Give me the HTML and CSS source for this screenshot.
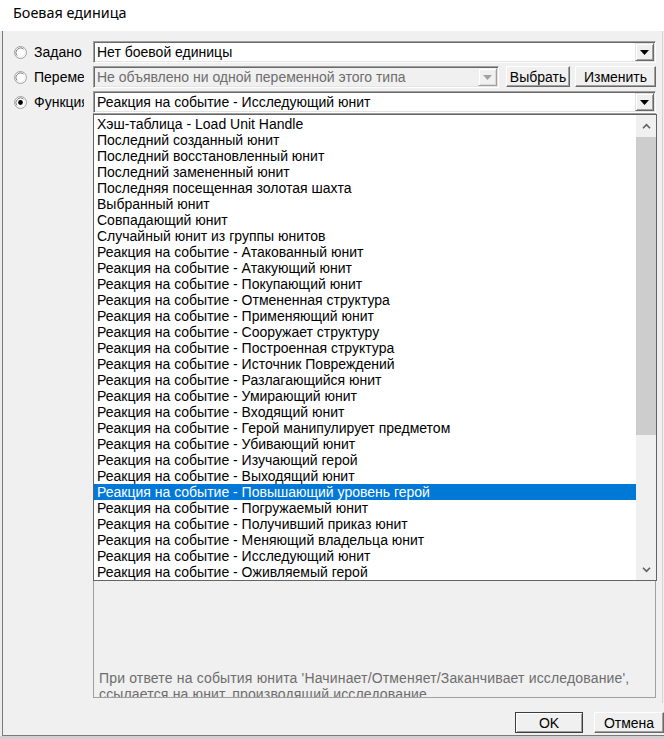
FILE: index.html
```html
<!DOCTYPE html>
<html lang="ru">
<head>
<meta charset="utf-8">
<title>Боевая единица</title>
<link rel="stylesheet" href="styles.css">
</head>
<body>
<div class="page">
  <div class="titlebar">Боевая единица</div>
  <div class="body">
    <div class="leftstrip"></div>
    <div class="client">
      <div class="panel">
        <div class="form">
          <div class="opt">
            <svg class="radio" width="13" height="13" viewBox="0 0 13 13"><circle cx="6.5" cy="6.5" r="6" fill="#fff" stroke="#a0a0a0"/><path d="M3.32 9.68A4.5 4.5 0 0 1 9.68 3.32" stroke="#7a7a7a" fill="none"/><path d="M9.68 3.32A4.5 4.5 0 0 1 3.32 9.68" stroke="#ececec" fill="none"/></svg>
            <span class="opt-label">Задано</span>
          </div>
          <div class="combo">
            <div class="combo-text">Нет боевой единицы</div>
            <div class="drop"><svg width="9" height="5" viewBox="0 0 9 5"><path d="M0 0H9L4.5 5Z" fill="#000"/></svg></div>
          </div>
          <div class="opt">
            <svg class="radio" width="13" height="13" viewBox="0 0 13 13"><circle cx="6.5" cy="6.5" r="6" fill="#fff" stroke="#a0a0a0"/><path d="M3.32 9.68A4.5 4.5 0 0 1 9.68 3.32" stroke="#7a7a7a" fill="none"/><path d="M9.68 3.32A4.5 4.5 0 0 1 3.32 9.68" stroke="#ececec" fill="none"/></svg>
            <span class="opt-label">Переменная</span>
          </div>
          <div class="row2">
            <div class="combo disabled">
              <div class="combo-text">Не объявлено ни одной переменной этого типа</div>
              <div class="drop"><svg width="9" height="5" viewBox="0 0 9 5"><path d="M0 0H9L4.5 5Z" fill="#a0a0a0"/></svg></div>
            </div>
            <button class="btn btn-select">Выбрать</button>
            <button class="btn btn-edit">Изменить</button>
          </div>
          <div class="opt">
            <svg class="radio" width="13" height="13" viewBox="0 0 13 13"><circle cx="6.5" cy="6.5" r="6" fill="#fff" stroke="#a0a0a0"/><path d="M3.32 9.68A4.5 4.5 0 0 1 9.68 3.32" stroke="#7a7a7a" fill="none"/><path d="M9.68 3.32A4.5 4.5 0 0 1 3.32 9.68" stroke="#ececec" fill="none"/><circle cx="6.5" cy="6.5" r="2.4" fill="#000"/></svg>
            <span class="opt-label">Функция</span>
          </div>
          <div class="combo">
            <div class="combo-text">Реакция на событие - Исследующий юнит</div>
            <div class="drop"><svg width="9" height="5" viewBox="0 0 9 5"><path d="M0 0H9L4.5 5Z" fill="#000"/></svg></div>
          </div>
        </div>
        <div class="desc">
          <div class="droplist">
            <div class="items">
              <div class="item">Хэш-таблица - Load Unit Handle</div>
              <div class="item">Последний созданный юнит</div>
              <div class="item">Последний восстановленный юнит</div>
              <div class="item">Последний замененный юнит</div>
              <div class="item">Последняя посещенная золотая шахта</div>
              <div class="item">Выбранный юнит</div>
              <div class="item">Совпадающий юнит</div>
              <div class="item">Случайный юнит из группы юнитов</div>
              <div class="item">Реакция на событие - Атакованный юнит</div>
              <div class="item">Реакция на событие - Атакующий юнит</div>
              <div class="item">Реакция на событие - Покупающий юнит</div>
              <div class="item">Реакция на событие - Отмененная структура</div>
              <div class="item">Реакция на событие - Применяющий юнит</div>
              <div class="item">Реакция на событие - Сооружает структуру</div>
              <div class="item">Реакция на событие - Построенная структура</div>
              <div class="item">Реакция на событие - Источник Повреждений</div>
              <div class="item">Реакция на событие - Разлагающийся юнит</div>
              <div class="item">Реакция на событие - Умирающий юнит</div>
              <div class="item">Реакция на событие - Входящий юнит</div>
              <div class="item">Реакция на событие - Герой манипулирует предметом</div>
              <div class="item">Реакция на событие - Убивающий юнит</div>
              <div class="item">Реакция на событие - Изучающий герой</div>
              <div class="item">Реакция на событие - Выходящий юнит</div>
              <div class="item sel">Реакция на событие - Повышающий уровень герой</div>
              <div class="item">Реакция на событие - Погружаемый юнит</div>
              <div class="item">Реакция на событие - Получивший приказ юнит</div>
              <div class="item">Реакция на событие - Меняющий владельца юнит</div>
              <div class="item">Реакция на событие - Исследующий юнит</div>
              <div class="item">Реакция на событие - Оживляемый герой</div>
            </div>
            <div class="scroll">
              <div class="sb-btn"><svg width="9" height="6" viewBox="0 0 9 6"><path d="M1 5.2L4.5 1.6L8 5.2" stroke="#606060" stroke-width="1.6" fill="none"/></svg></div>
              <div class="sb-track"><div class="sb-thumb"></div></div>
              <div class="sb-btn"><svg width="9" height="6" viewBox="0 0 9 6"><path d="M1 0.8L4.5 4.4L8 0.8" stroke="#606060" stroke-width="1.6" fill="none"/></svg></div>
            </div>
          </div>
          <div class="desc-text">
            <div class="desc-line">При ответе на события юнита 'Начинает/Отменяет/Заканчивает исследование',</div>
            <div class="desc-line">ссылается на юнит, производящий исследование</div>
          </div>
        </div>
      </div>
      <div class="buttons">
        <button class="btn btn-ok">OK</button>
        <button class="btn btn-cancel">Отмена</button>
      </div>
    </div>
  </div>
  <div class="shadow"></div>
</div>
</body>
</html>
```

FILE: styles.css
```css
* { box-sizing: border-box; }
html, body { margin: 0; padding: 0; }
body {
  width: 664px;
  height: 739px;
  overflow: hidden;
  background: #f0f0f0;
  font-family: "Liberation Sans", Arial, sans-serif;
  font-size: 14px;
  color: #000;
}
.page {
  display: flex;
  flex-direction: column;
  width: 664px;
  height: 739px;
}
.titlebar {
  flex: none;
  height: 31px;
  background: #fff;
  padding-left: 13px;
  font-family: "Noto Sans", "Open Sans", sans-serif;
  font-size: 14.4px;
  line-height: 25px;
}
.body {
  flex: 1;
  display: flex;
  min-height: 0;
}
.leftstrip {
  width: 2px;
  background: #ececec;
}
.client {
  flex: 1;
  display: flex;
  flex-direction: column;
  border-left: 1px solid #7a7a7a;
  border-bottom: 1px solid #7a7a7a;
}
.panel {
  width: 660px;
  padding: 10px 5px 5px 0;
  border-right: 1px solid #d4d4d4;
}
.form {
  display: grid;
  grid-template-columns: 90px 563px;
  grid-auto-rows: 22px;
  row-gap: 3px;
}
.opt {
  display: flex;
  align-items: center;
  padding-left: 11px;
  gap: 7px;
}
.radio { flex: none; }
.opt-label {
  width: 50px;
  overflow: hidden;
  white-space: nowrap;
}
.combo {
  display: flex;
  align-items: center;
  height: 22px;
  background: #fff;
  border: 1px solid;
  border-color: #a0a0a0 #fff #fff #a0a0a0;
  box-shadow: inset 1px 1px #696969, inset -1px -1px #e3e3e3;
  padding: 1px;
}
.combo-text {
  flex: 1;
  padding-left: 2px;
  line-height: 18px;
  white-space: nowrap;
  overflow: hidden;
}
.drop {
  flex: none;
  width: 19px;
  height: 18px;
  display: flex;
  align-items: center;
  justify-content: center;
  background: #f0f0f0;
  border: 1px solid;
  border-color: #e3e3e3 #696969 #696969 #e3e3e3;
  box-shadow: inset 1px 1px #fff, inset -1px -1px #a0a0a0;
}
.combo.disabled { background: #f0f0f0; }
.combo.disabled .combo-text { color: #6d6d6d; }
.combo.disabled .drop {
  border-color: #f0f0f0 #a0a0a0 #a0a0a0 #f0f0f0;
  box-shadow: inset 1px 1px #fff, inset -1px -1px #dadada;
}
.row2 {
  display: flex;
  align-items: flex-start;
}
.row2 .combo { width: 406px; flex: none; }
.btn {
  height: 21px;
  padding: 0;
  margin: 0;
  font: inherit;
  color: #000;
  background: #f0f0f0;
  border: 1px solid;
  border-color: #fff #696969 #696969 #fff;
  box-shadow: inset -1px -1px #a0a0a0;
  text-align: center;
}
.btn-select { width: 64px; margin-left: 7px; }
.btn-edit { width: 81px; margin-left: 5px; }
.desc {
  position: relative;
  margin-left: 90px;
  width: 563px;
  height: 585px;
  border: 1px solid #a0a0a0;
  display: flex;
  flex-direction: column;
  justify-content: flex-end;
}
.desc-text {
  height: 27px;
  overflow: hidden;
  padding-left: 5px;
  line-height: 16px;
  color: #6d6d6d;
  white-space: nowrap;
  letter-spacing: 0.16px;
}
.droplist {
  position: absolute;
  left: -1px;
  top: 0;
  width: 564px;
  height: 467px;
  border: 1px solid #646464;
  background: #fff;
  display: flex;
}
.items {
  flex: 1;
  padding-top: 1px;
  overflow: hidden;
}
.item {
  height: 16px;
  line-height: 16px;
  padding-left: 3px;
  white-space: nowrap;
}
.item.sel {
  background: #0078d7;
  color: #fff;
}
.scroll {
  width: 20px;
  display: flex;
  flex-direction: column;
  background: #f0f0f0;
}
.sb-btn {
  height: 21px;
  flex: none;
  display: flex;
  align-items: center;
  justify-content: center;
}
.sb-track {
  flex: 1;
  padding-top: 1px;
}
.sb-thumb {
  height: 298px;
  background: #cdcdcd;
}
.buttons {
  display: flex;
  justify-content: flex-end;
  gap: 11px;
  margin-top: 9px;
}
.btn-ok {
  width: 68px;
  border-color: #3c3c3c;
  box-shadow: inset 1px 1px #fff, inset -1px -1px #a0a0a0;
}
.btn-cancel { width: 70px; }
.shadow {
  flex: none;
  height: 3px;
  background: #cfcfcf;
}
```
